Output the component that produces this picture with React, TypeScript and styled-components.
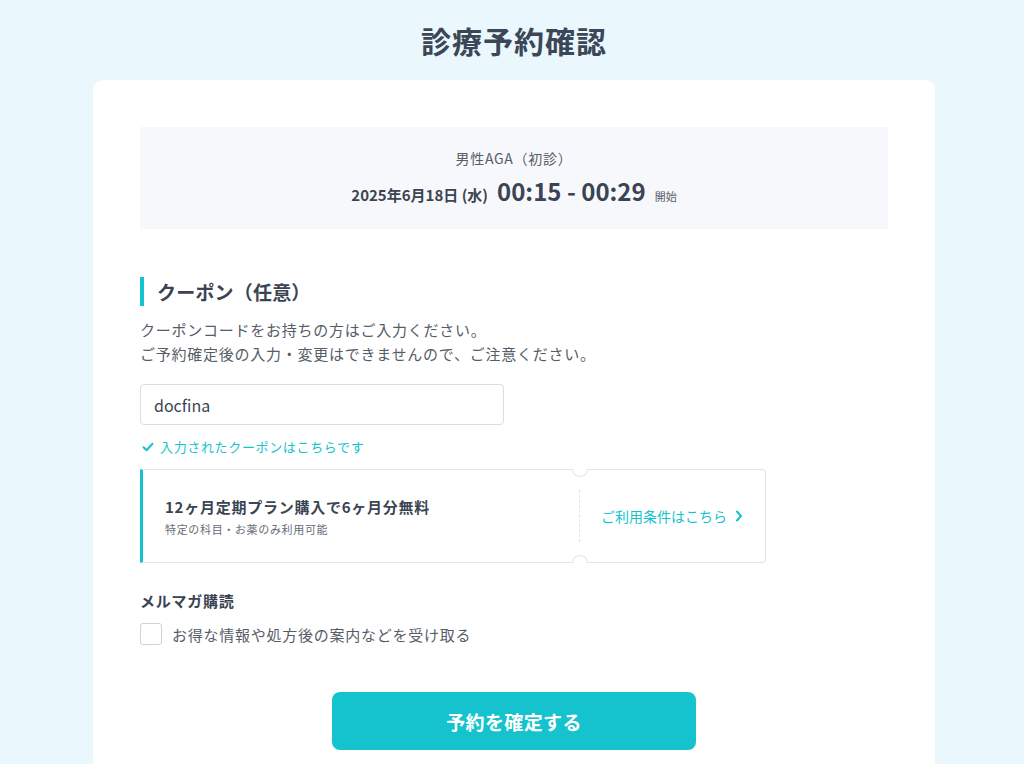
import React from "react";
import styled, { createGlobalStyle } from "styled-components";

const GlobalStyle = createGlobalStyle`
  body {
    margin: 0;
    background: #eaf8fd;
    font-family: "Noto Sans CJK JP", "Noto Sans", sans-serif;
    color: #3a4452;
  }
`;

const TEAL = "#14c3cd";

const Page = styled.div`
  width: 100%;
  box-sizing: border-box;
  padding-left: 4px;
  display: flex;
  flex-direction: column;
  align-items: center;
`;

const Title = styled.h1`
  margin: 0;
  height: 80px;
  display: flex;
  align-items: center;
  font-size: 30px;
  font-weight: 700;
  color: #3b4757;
  letter-spacing: 1px;
`;

const Card = styled.div`
  width: 842px;
  box-sizing: border-box;
  background: #fff;
  border-radius: 10px;
  padding: 47px 47px 40px;
  display: flex;
  flex-direction: column;
`;

const Summary = styled.div`
  height: 102px;
  background: #f7f8fb;
  display: flex;
  flex-direction: column;
  align-items: center;
  justify-content: center;
  gap: 5px;
`;

const Menu = styled.div`
  font-size: 14px;
  letter-spacing: 0.05em;
  color: #555d68;
`;

const DateRow = styled.div`
  display: flex;
  align-items: baseline;
  gap: 9px;
  color: #3b4452;
`;

const DateText = styled.span`
  font-size: 15px;
  font-weight: 700;
`;

const TimeText = styled.span`
  font-size: 24px;
  font-weight: 700;
`;

const StartText = styled.span`
  font-size: 11px;
  color: #555d68;
`;

const Heading = styled.h2`
  margin: 48px 0 0;
  padding-left: 13px;
  border-left: 4px solid ${TEAL};
  height: 29px;
  display: flex;
  align-items: center;
  font-size: 19px;
  font-weight: 700;
  letter-spacing: 0.01em;
  color: #3b4452;
`;

const Desc = styled.p`
  margin: 12px 0 0;
  font-size: 15px;
  line-height: 24px;
  letter-spacing: 0.05em;
  color: #555d68;
`;

const Input = styled.input`
  margin-top: 18px;
  width: 364px;
  height: 41px;
  box-sizing: border-box;
  border: 1px solid #dcdee6;
  border-radius: 4px;
  padding: 0 13px;
  font-family: inherit;
  font-size: 16px;
  color: #3b4452;
  outline: none;
`;

const Notice = styled.div`
  margin-top: 12px;
  display: flex;
  align-items: center;
  gap: 6px;
  padding-left: 2px;
  font-size: 13px;
  letter-spacing: 0.05em;
  color: ${TEAL};
`;

const Ticket = styled.div`
  position: relative;
  margin-top: 13px;
  width: 626px;
  height: 94px;
  box-sizing: border-box;
  border: 1px solid #e2e4ea;
  border-left: 3px solid ${TEAL};
  border-radius: 0 4px 4px 0;
  display: flex;

  &::before,
  &::after {
    content: "";
    position: absolute;
    left: 429px;
    width: 16px;
    height: 8px;
    box-sizing: border-box;
    background: #fff;
    border: 1px solid #e2e4ea;
  }
  &::before {
    top: -1px;
    border-top: none;
    border-radius: 0 0 8px 8px;
  }
  &::after {
    bottom: -1px;
    border-bottom: none;
    border-radius: 8px 8px 0 0;
  }
`;

const TicketMain = styled.div`
  width: 436px;
  box-sizing: border-box;
  padding-left: 22px;
  display: flex;
  flex-direction: column;
  justify-content: center;
  gap: 4px;
`;

const TicketTitle = styled.div`
  font-size: 15px;
  font-weight: 700;
  letter-spacing: 0.05em;
  color: #3b4452;
`;

const TicketSub = styled.div`
  font-size: 11px;
  letter-spacing: 0.06em;
  color: #666d78;
`;

const Divider = styled.div`
  margin: 20px 0;
  border-left: 1px dashed #e2e4ea;
`;

const TermsLink = styled.a`
  flex: 1;
  display: flex;
  align-items: center;
  padding-left: 21px;
  gap: 8px;
  font-size: 14px;
  color: ${TEAL};
  text-decoration: none;
`;

const SubHeading = styled.div`
  margin-top: 27px;
  font-size: 15px;
  font-weight: 700;
  letter-spacing: 0.05em;
  color: #3b4452;
`;

const CheckRow = styled.label`
  margin-top: 12px;
  display: flex;
  align-items: center;
  gap: 10px;
  font-size: 15px;
  letter-spacing: 0.05em;
  color: #555d68;
`;

const CheckBox = styled.span`
  width: 22px;
  height: 22px;
  box-sizing: border-box;
  border: 1px solid #cfd2da;
  border-radius: 3px;
  background: #fff;
`;

const SubmitButton = styled.button`
  margin: 47px auto 0;
  width: 364px;
  height: 58px;
  border: none;
  border-radius: 8px;
  background: ${TEAL};
  color: #fff;
  font-family: inherit;
  font-size: 19px;
  font-weight: 700;
  letter-spacing: 0.02em;
  cursor: pointer;
`;

const CheckIcon = () => (
  <svg width="12" height="12" viewBox="0 0 12 12" fill="none">
    <path d="M1.5 6.3 4.6 9.2 10.5 2.8" stroke={TEAL} strokeWidth="2" strokeLinecap="round" strokeLinejoin="round" />
  </svg>
);

const Chevron = () => (
  <svg width="8" height="12" viewBox="0 0 8 12" fill="none">
    <path d="M2 1.5 6 6 2 10.5" stroke={TEAL} strokeWidth="2" strokeLinecap="round" strokeLinejoin="round" />
  </svg>
);

export default function App() {
  return (
    <Page>
      <GlobalStyle />
      <Title>診療予約確認</Title>
      <Card>
        <Summary>
          <Menu>男性AGA（初診）</Menu>
          <DateRow>
            <DateText>2025年6月18日 (水)</DateText>
            <TimeText>00:15 - 00:29</TimeText>
            <StartText>開始</StartText>
          </DateRow>
        </Summary>

        <Heading>クーポン（任意）</Heading>
        <Desc>
          クーポンコードをお持ちの方はご入力ください。
          <br />
          ご予約確定後の入力・変更はできませんので、ご注意ください。
        </Desc>
        <Input defaultValue="docfina" />
        <Notice>
          <CheckIcon />
          入力されたクーポンはこちらです
        </Notice>
        <Ticket>
          <TicketMain>
            <TicketTitle>12ヶ月定期プラン購入で6ヶ月分無料</TicketTitle>
            <TicketSub>特定の科目・お薬のみ利用可能</TicketSub>
          </TicketMain>
          <Divider />
          <TermsLink href="#">
            ご利用条件はこちら
            <Chevron />
          </TermsLink>
        </Ticket>

        <SubHeading>メルマガ購読</SubHeading>
        <CheckRow>
          <CheckBox />
          お得な情報や処方後の案内などを受け取る
        </CheckRow>

        <SubmitButton>予約を確定する</SubmitButton>
      </Card>
    </Page>
  );
}
